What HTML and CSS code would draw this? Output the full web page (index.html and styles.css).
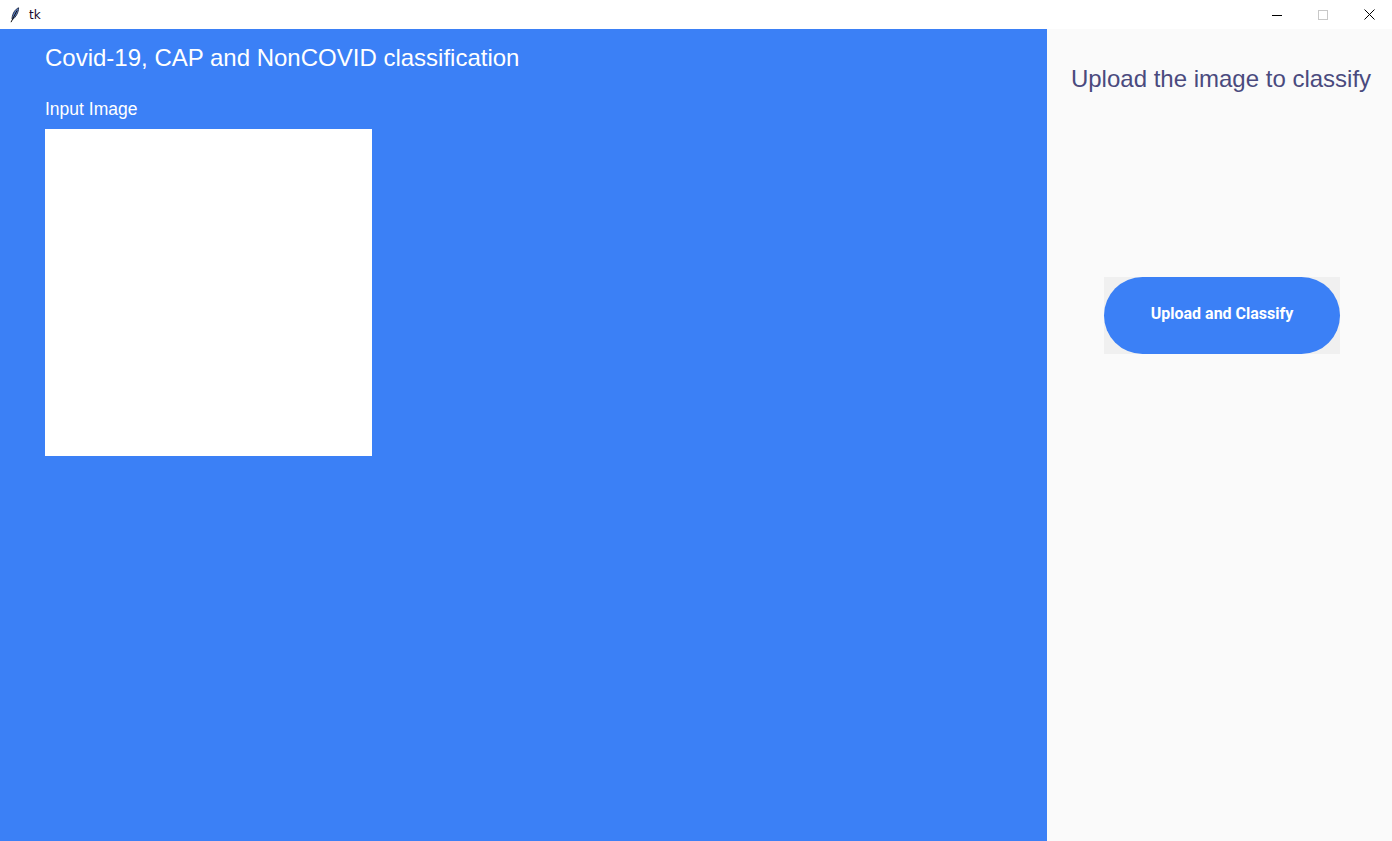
FILE: index.html
```html
<!DOCTYPE html>
<html>
<head>
<meta charset="utf-8">
<link rel="stylesheet" href="styles.css">
</head>
<body>
<div class="window">
  <div class="titlebar">
    <div class="tb-left">
      <svg class="feather" width="10" height="16" viewBox="0 0 10 16">
        <path d="M8.6 0.8 C5.5 2 2.5 6 2 11.5 L2.6 12.6 C5.8 10 8.6 5.5 8.6 0.8 Z" fill="#5b7fc4" stroke="#1c2640" stroke-width="0.9"/>
        <path d="M7 3.5 L1 15.2" stroke="#111" stroke-width="1"/>
      </svg>
      <span class="tk">tk</span>
    </div>
    <div class="tb-controls">
      <span class="ctl"><svg width="10" height="10" viewBox="0 0 10 10"><path d="M0 5.5 H10" stroke="#000" stroke-width="1"/></svg></span>
      <span class="ctl"><svg width="10" height="10" viewBox="0 0 10 10"><rect x="0.5" y="0.5" width="9" height="9" fill="none" stroke="#c8c8c8" stroke-width="1"/></svg></span>
      <span class="ctl"><svg width="11" height="11" viewBox="0 0 11 11"><path d="M0.5 0.5 L10.5 10.5 M10.5 0.5 L0.5 10.5" stroke="#000" stroke-width="1"/></svg></span>
    </div>
  </div>
  <div class="content">
    <main class="left">
      <h1 class="title">Covid-19, CAP and NonCOVID classification</h1>
      <div class="label">Input Image</div>
      <div class="image-box"></div>
    </main>
    <aside class="right">
      <h2 class="side-title">Upload the image to classify</h2>
      <div class="btn-wrap">
        <button class="btn">Upload and Classify</button>
      </div>
    </aside>
  </div>
</div>
</body>
</html>
```
FILE: styles.css
```css
* { box-sizing: border-box; }
html, body { margin: 0; padding: 0; }
body { width: 1392px; height: 841px; overflow: hidden; font-family: "Liberation Sans", Arial, sans-serif; }
.window { display: flex; flex-direction: column; height: 841px; }
.titlebar {
  height: 29px; background: #fff; display: flex; align-items: center; justify-content: space-between;
}
.tb-left { display: flex; align-items: center; padding-left: 10px; }
.feather { margin-right: 9px; }
.tk { font-family: "Segoe UI", "DejaVu Sans", sans-serif; font-size: 12px; color: #1a0830; }
.tb-controls { display: flex; height: 29px; }
.ctl { width: 46px; height: 29px; display: flex; align-items: center; justify-content: center; }
.content { flex: 1; display: flex; }
.left { width: 1047px; background: #3b80f6; padding: 0 0 0 45px; }
.title { margin: 15px 0 0; font-weight: normal; font-size: 24px; line-height: 28px; color: #fff; }
.label { margin-top: 26px; font-size: 17.5px; line-height: 22px; color: #fff; }
.image-box { margin-top: 9px; width: 327px; height: 327px; background: #fff; }
.right { flex: 1; background: #fafafa; display: flex; flex-direction: column; align-items: center; padding-left: 5px; }
.side-title { margin: 36px 0 0; font-weight: normal; font-size: 24px; line-height: 28px; color: #4a4a7e; padding-right: 2px; }
.btn-wrap { margin-top: 184px; width: 236px; height: 77px; background: #f0f0f0; }
.btn {
  width: 236px; height: 77px; border: none; border-radius: 39px; background: #3b80f6; color: #fff;
  font-family: Roboto, sans-serif; font-weight: bold; font-size: 16px; padding: 0 0 5px; cursor: pointer;
}
```
